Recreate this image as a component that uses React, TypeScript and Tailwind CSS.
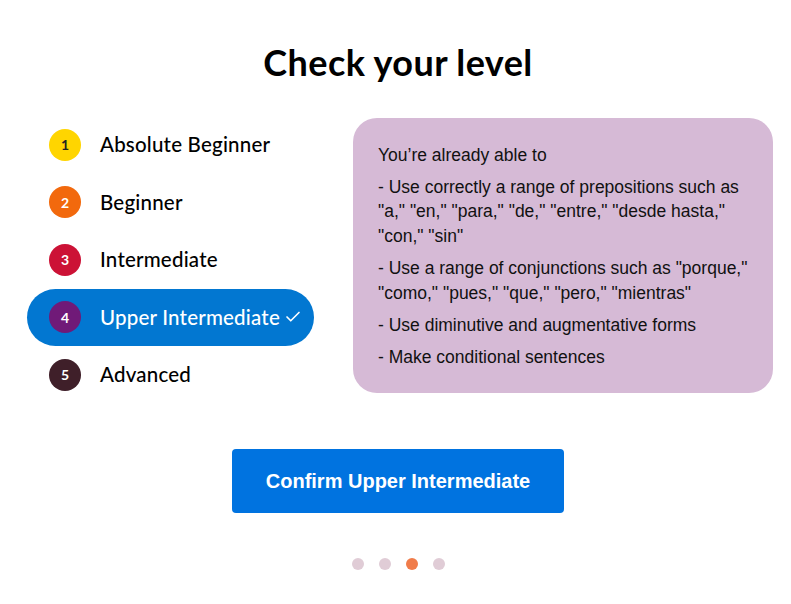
import { Check } from 'lucide-react';

const levels = [
  { n: 1, name: 'Absolute Beginner', dot: 'bg-[#ffd500] text-[#222]' },
  { n: 2, name: 'Beginner', dot: 'bg-[#f2690d] text-white' },
  { n: 3, name: 'Intermediate', dot: 'bg-[#cc1236] text-white' },
  { n: 4, name: 'Upper Intermediate', dot: 'bg-[#701a78] text-white' },
  { n: 5, name: 'Advanced', dot: 'bg-[#3f1f29] text-white' },
];

const selected = 4;

export default function App() {
  return (
    <div className="min-h-[604px] w-[791px] bg-white font-['Lato','Noto_Sans',sans-serif] text-black">
      <h1 className="pl-[5px] pt-[40px] text-center text-[36px] font-bold leading-[44px] tracking-[0.4px]">
        Check your level
      </h1>

      <div className="mt-[32px] flex items-start pl-[27px]">
        <ul className="w-[287px]">
          {levels.map((l) => {
            const active = l.n === selected;
            return (
              <li
                key={l.n}
                className={`flex h-[57.5px] items-center rounded-full pl-[22px] ${
                  active ? 'bg-[#0277d1] text-white' : ''
                }`}
              >
                <span
                  className={`flex h-8 w-8 items-center justify-center rounded-full text-[14px] font-bold ${l.dot}`}
                >
                  {l.n}
                </span>
                <span className="ml-[19px] text-[20.5px] font-medium tracking-[0.2px]">{l.name}</span>
                {active && <Check className="ml-[4px] h-[18px] w-[18px]" strokeWidth={2.2} />}
              </li>
            );
          })}
        </ul>

        <div className="ml-[39px] mt-[2px] h-[275px] w-[420px] rounded-[24px] bg-[#d6bad6] pl-[25px] pr-[20px] pt-[25px] font-['Liberation_Sans',Arial,sans-serif] text-[17.5px] leading-[24.5px] text-[#111]">
          <p>You’re already able to</p>
          <p className="mt-[7px]">
            - Use correctly a range of prepositions such as "a," "en," "para," "de," "entre,"
            "desde hasta," "con," "sin"
          </p>
          <p className="mt-[8px]">
            - Use a range of conjunctions such as "porque," "como," "pues," "que," "pero,"
            "mientras"
          </p>
          <p className="mt-[8px]">- Use diminutive and augmentative forms</p>
          <p className="mt-[7px]">- Make conditional sentences</p>
        </div>
      </div>

      <div className="mt-[45px] flex justify-center pl-[5px]">
        <button className="h-16 w-[332px] rounded-[4px] bg-[#0073e0] font-['Liberation_Sans',Arial,sans-serif] text-[20px] font-bold text-white">
          Confirm Upper Intermediate
        </button>
      </div>

      <div className="mt-[45px] flex justify-center gap-[15px] pl-[5px]">
        <span className="h-3 w-3 rounded-full bg-[#e0ccd6]" />
        <span className="h-3 w-3 rounded-full bg-[#e0ccd6]" />
        <span className="h-3 w-3 rounded-full bg-[#f07c4a]" />
        <span className="h-3 w-3 rounded-full bg-[#e0ccd6]" />
      </div>
    </div>
  );
}
